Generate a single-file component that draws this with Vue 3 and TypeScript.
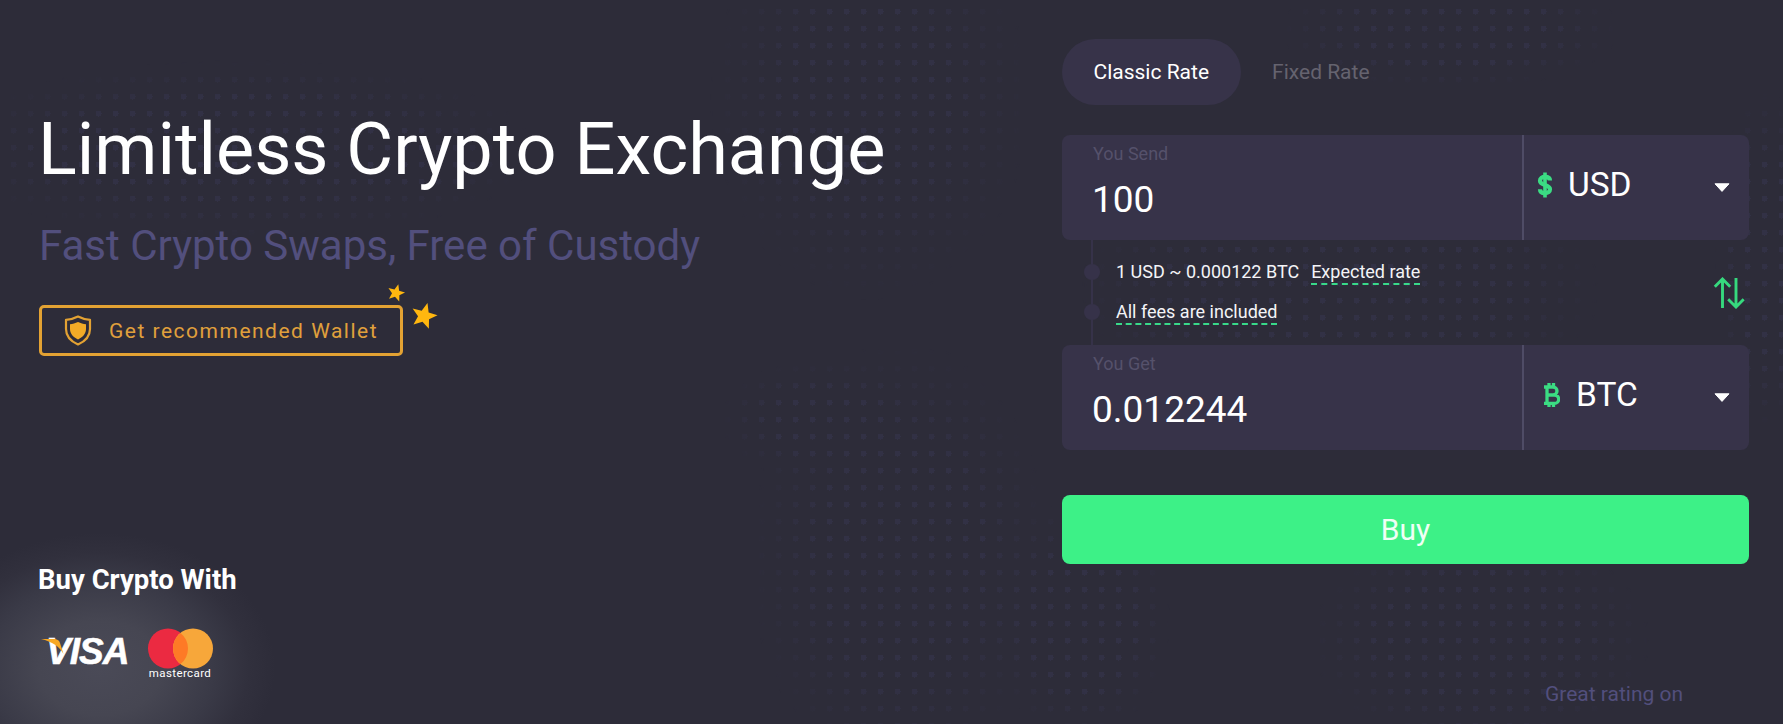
<script setup lang="ts">
interface Row { label: string; value: string; cur: string; icon: 'usd' | 'btc' }
const send: Row = { label: 'You Send', value: '100', cur: 'USD', icon: 'usd' }
const get: Row = { label: 'You Get', value: '0.012244', cur: 'BTC', icon: 'btc' }
</script>

<template>
  <div class="page">
    <div class="dots" aria-hidden="true"></div>
    <section class="hero">
      <h1>Limitless Crypto Exchange</h1>
      <p class="sub">Fast Crypto Swaps, Free of Custody</p>
      <a class="wallet">
        <svg class="shield" viewBox="0 0 28 31" width="28" height="31">
          <path d="M14 1.5C18 3.6 22 4.6 26 4.8V14c0 7-5 12.400-12 15.500C7 26.400 2 21 2 14V4.800C6 4.600 10 3.600 14 1.500Z" fill="none" stroke="#e3a233" stroke-width="2.200" stroke-linejoin="round"/>
          <path d="M14 7c2.700 1.300 5.300 2 8 2.200V14c0 4.700-3.300 8.200-8 10.500C9.300 22.200 6 18.700 6 14V9.200C8.700 9 11.300 8.300 14 7Z" fill="#f2ab27"/>
        </svg>
        <span>Get recommended Wallet</span>
        <svg class="star small" viewBox="-10 -10 20 20" width="20" height="20">
          <polygon points="0,-9 2.400,-3 8.600,-2.800 3.800,1.200 5.300,7.300 0,3.900 -5.300,7.300 -3.800,1.200 -8.600,-2.800 -2.400,-3" fill="#ffb70f" transform="rotate(15)"/>
        </svg>
        <svg class="star big" viewBox="-10 -10 20 20" width="30" height="30">
          <polygon points="0,-9 2.400,-3 8.600,-2.800 3.800,1.200 5.300,7.300 0,3.900 -5.300,7.300 -3.800,1.200 -8.600,-2.800 -2.400,-3" fill="#ffb70f" transform="rotate(15)"/>
        </svg>
      </a>
      <div class="pay">
        <h2>Buy Crypto With</h2>
        <div class="logos">
          <div class="visa">
            <svg class="swoosh" viewBox="0 0 24 16" width="24" height="16">
              <path d="M0 0h13c3 0 5 1 6 4l3.500 11C19 8 11 2.500 0 0Z" fill="#f7a823"/>
            </svg>
            <span>VISA</span>
          </div>
          <div class="mc">
            <svg viewBox="0 0 66 41" width="66" height="41">
              <circle cx="21" cy="20.500" r="20" fill="#eb2a41"/>
              <circle cx="46" cy="20.500" r="20" fill="#f7a73a"/>
              <path d="M33.500 4.900a20 20 0 0 1 0 31.200a20 20 0 0 1 0-31.200Z" fill="#fe7a26"/>
            </svg>
            <span>mastercard</span>
          </div>
        </div>
      </div>
    </section>

    <section class="form">
      <div class="tabs">
        <button class="tab active">Classic Rate</button>
        <button class="tab">Fixed Rate</button>
      </div>

      <div class="box">
        <div class="amount">
          <label>{{ send.label }}</label>
          <div class="value">{{ send.value }}</div>
        </div>
        <div class="cur">
          <svg class="usd" viewBox="0 0 16 26" width="16" height="26">
            <path d="M13 8.500C13 6 11 4.800 8 4.800S3 6.300 3 8.700c0 2.300 2 3.300 5 4.300s5 2 5 4.300c0 2.400-2 3.900-5 3.900s-5-1.400-5-3.900" fill="none" stroke="#3bdc83" stroke-width="4.200"/>
            <path d="M8 .5v25" stroke="#3bdc83" stroke-width="3.600"/>
          </svg>
          <span class="code">{{ send.cur }}</span>
          <svg class="caret" viewBox="0 0 16 9" width="16" height="9"><path d="M1 .8h14L8 8.400Z" fill="#fff" stroke="#fff" stroke-linejoin="round"/></svg>
        </div>
      </div>

      <div class="rates">
        <div class="lines">
          <div class="line">
            <i class="node"></i>
            <span class="plain">1 USD ~ 0.000122 BTC</span>
            <span class="dash">Expected rate</span>
          </div>
          <div class="line">
            <i class="node"></i>
            <span class="dash">All fees are included</span>
          </div>
        </div>
        <svg class="swap" viewBox="0 0 32 32" width="32" height="32">
          <path d="M9.500 31V2M1.800 9.800 9.500 2l7.700 7.800M23 1v29M15.200 22.300 23 30l7.700-7.700" fill="none" stroke="#36d97e" stroke-width="2.900"/>
        </svg>
      </div>

      <div class="box">
        <div class="amount">
          <label>{{ get.label }}</label>
          <div class="value">{{ get.value }}</div>
        </div>
        <div class="cur btc">
          <svg class="usd" viewBox="0 0 18 26" width="18" height="26">
            <path d="M2 5h9a4 4 0 0 1 0 8H5m0 0h7.500a4.200 4.200 0 0 1 0 8.400H2M5 5v16.400M7 1v4M11.500 1v4M7 21v4M11.500 21v4" fill="none" stroke="#3bdc83" stroke-width="3.300"/>
          </svg>
          <span class="code">{{ get.cur }}</span>
          <svg class="caret" viewBox="0 0 16 9" width="16" height="9"><path d="M1 .8h14L8 8.400Z" fill="#fff" stroke="#fff" stroke-linejoin="round"/></svg>
        </div>
      </div>

      <button class="buy">Buy</button>
      <div class="rating">Great rating on</div>
    </section>
  </div>
</template>

<style>
html, body { margin: 0; background: #2d2c39; }
</style>

<style scoped>
.page {
  position: relative;
  display: flex;
  justify-content: space-between;
  width: 1783px;
  height: 724px;
  overflow: hidden;
  box-sizing: border-box;
  font-family: Roboto, "Open Sans", sans-serif;
  color: #fff;
  background:
    radial-gradient(ellipse 175px 135px at 100px 668px, #4a4a57 0%, #464652 35%, #3a3a47 65%, #31303d 85%, rgba(45, 44, 57, 0) 100%),
    #2d2c39;
}
.dots {
  position: absolute;
  inset: 0;
  background-image: radial-gradient(circle 3px at center, #323145 0 100%, transparent 100%);
  background-size: 17px 17px;
  background-position: 5px 3px;
  -webkit-mask-image:
    radial-gradient(ellipse 300px 90px at 240px 150px, #000 60%, transparent 100%),
    radial-gradient(ellipse 160px 200px at 870px 100px, #000 50%, transparent 100%),
    radial-gradient(ellipse 150px 220px at 900px 560px, #000 55%, transparent 100%),
    radial-gradient(ellipse 100px 60px at 820px 420px, #000 50%, transparent 100%),
    radial-gradient(ellipse 260px 130px at 1340px 290px, #000 65%, transparent 100%),
    radial-gradient(ellipse 90px 120px at 1080px 620px, #000 60%, transparent 100%),
    radial-gradient(ellipse 170px 110px at 1480px 640px, #000 60%, transparent 100%),
    radial-gradient(ellipse 50px 170px at 1765px 260px, #000 60%, transparent 100%),
    radial-gradient(ellipse 170px 60px at 1450px 30px, #000 60%, transparent 100%);
  mask-image:
    radial-gradient(ellipse 300px 90px at 240px 150px, #000 60%, transparent 100%),
    radial-gradient(ellipse 160px 200px at 870px 100px, #000 50%, transparent 100%),
    radial-gradient(ellipse 150px 220px at 900px 560px, #000 55%, transparent 100%),
    radial-gradient(ellipse 100px 60px at 820px 420px, #000 50%, transparent 100%),
    radial-gradient(ellipse 260px 130px at 1340px 290px, #000 65%, transparent 100%),
    radial-gradient(ellipse 90px 120px at 1080px 620px, #000 60%, transparent 100%),
    radial-gradient(ellipse 170px 110px at 1480px 640px, #000 60%, transparent 100%),
    radial-gradient(ellipse 50px 170px at 1765px 260px, #000 60%, transparent 100%),
    radial-gradient(ellipse 170px 60px at 1450px 30px, #000 60%, transparent 100%);
}
.hero {
  position: relative;
  display: flex;
  flex-direction: column;
  align-items: flex-start;
  padding: 108px 0 0 39px;
  box-sizing: border-box;
}
h1 {
  margin: 0 0 0 -1px;
  font-size: 72px;
  line-height: 84px;
  font-weight: 400;
  white-space: nowrap;
}
.sub {
  margin: 29px 0 0;
  font-size: 42px;
  line-height: 49px;
  color: #524f7d;
  white-space: nowrap;
}
.wallet {
  position: relative;
  display: flex;
  align-items: center;
  gap: 17px;
  width: 364px;
  height: 51px;
  margin-top: 35px;
  padding-left: 22px;
  box-sizing: border-box;
  border: 3px solid #e3a233;
  border-radius: 5px;
  font-size: 21px;
  letter-spacing: 1.500px;
  color: #e0a03c;
}
.star { position: absolute; }
.star.small { left: 344px; top: -25px; }
.star.big { left: 367px; top: -7px; }
.pay { margin-top: 208px; margin-left: -1px; }
h2 {
  margin: 0;
  font-size: 27.500px;
  line-height: 32px;
  font-weight: 700;
  white-space: nowrap;
}
.logos {
  display: flex;
  align-items: flex-start;
  margin-top: 32px;
  margin-left: 1px;
}
.visa {
  position: relative;
  width: 108px;
  padding-top: 3px;
}
.visa span {
  display: block;
  padding-left: 7px;
  font-family: "Liberation Sans", Arial, sans-serif;
  font-style: italic;
  font-weight: 700;
  font-size: 37px;
  line-height: 42px;
  letter-spacing: -1px;
  -webkit-text-stroke: .6px #fff;
}
.swoosh { position: absolute; left: 2px; top: 11px; }
.mc { display: flex; flex-direction: column; align-items: center; width: 66px; }
.mc svg { display: block; }
.mc span {
  margin-top: -2px;
  font-size: 11.500px;
  line-height: 12px;
  font-weight: 400;
  letter-spacing: .4px;
}
.form {
  position: relative;
  width: 687px;
  margin-right: 34px;
  padding-top: 39px;
}
.tabs { display: flex; margin-bottom: 30px; }
.tab {
  height: 66px;
  padding: 0 31.500px;
  border: 0;
  border-radius: 33px;
  background: transparent;
  font: 400 21px Roboto, sans-serif;
  color: #65636f;
}
.tab.active { background: #373349; color: #fff; }
.box {
  display: flex;
  height: 105px;
  border-radius: 8px;
  background: #373349;
}
.amount {
  flex: 1;
  padding: 8px 0 0 30px;
}
label {
  display: block;
  padding-left: 1px;
  font-size: 18px;
  line-height: 21px;
  color: #55516b;
}
.value {
  margin-top: 15px;
  font-size: 37px;
  line-height: 42px;
}
.cur {
  display: flex;
  align-items: center;
  width: 227px;
  box-sizing: border-box;
  padding: 0 19px 5px 13px;
  border-left: 2px solid #4f4c66;
}
.cur.btc { padding-left: 18px; }
.code {
  margin-left: 15px;
  font-size: 33.500px;
  line-height: 38px;
  font-weight: 400;
}
.cur.btc .code { margin-left: 16px; }
.caret { margin-left: auto; margin-top: 4px; }
.rates {
  position: relative;
  display: flex;
  justify-content: space-between;
  height: 105px;
  padding: 13px 4px 0 22px;
  box-sizing: border-box;
}
.rates::before {
  content: "";
  position: absolute;
  left: 29px;
  top: 0;
  bottom: 0;
  width: 2px;
  background: #363249;
}
.line {
  position: relative;
  display: flex;
  align-items: center;
  height: 40px;
  font-size: 18px;
  color: #f4f4f7;
}
.node {
  width: 16px;
  height: 16px;
  margin: -2px 16px 0 0;
  border-radius: 50%;
  background: #363249;
}
.plain, .dash {
  line-height: 22px;
  border-bottom: 2px solid transparent;
}
.dash {
  margin-left: 12px;
  border-bottom: 2px dashed #39d98a;
}
.node + .dash { margin-left: 0; }
.swap { margin-top: 24px; }
.buy {
  display: block;
  width: 100%;
  height: 69px;
  margin-top: 45px;
  border: 0;
  border-radius: 8px;
  background: #3df187;
  color: #effff5;
  font: 400 30px Roboto, sans-serif;
}
.rating {
  margin-top: 118px;
  padding-left: 483px;
  font-size: 21px;
  line-height: 24px;
  color: #524f7d;
}
</style>
